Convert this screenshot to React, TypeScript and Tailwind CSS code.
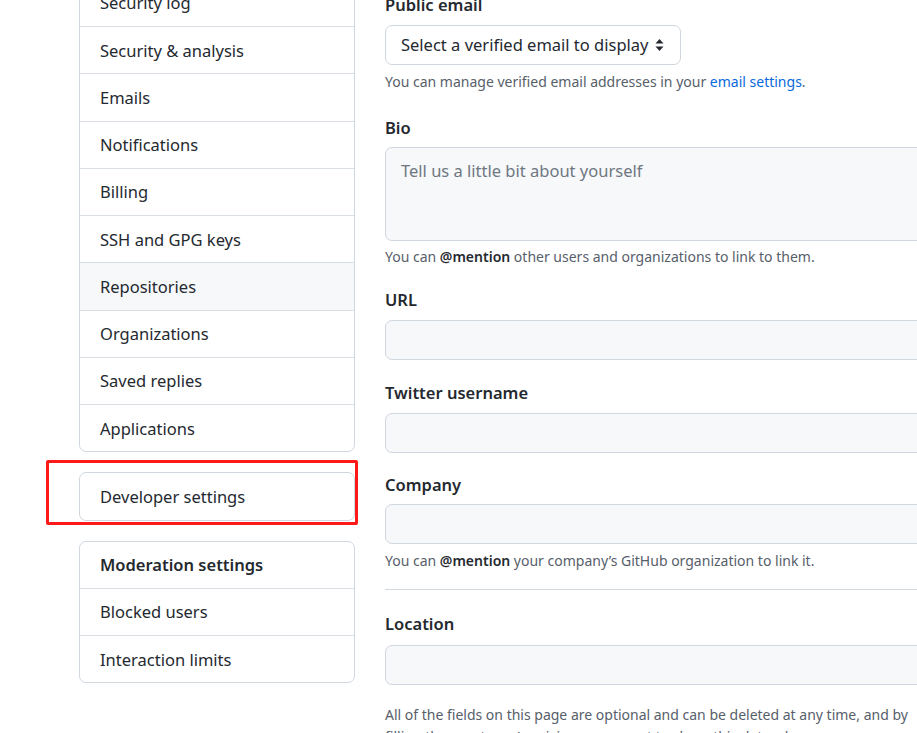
import { ReactNode } from "react";

const menu = [
  "Security log",
  "Security & analysis",
  "Emails",
  "Notifications",
  "Billing",
  "SSH and GPG keys",
  "Repositories",
  "Organizations",
  "Saved replies",
  "Applications",
];

function MenuRow({
  children,
  active,
  bold,
  first,
}: {
  children: ReactNode;
  active?: boolean;
  bold?: boolean;
  first?: boolean;
}) {
  return (
    <div
      className={`px-[20px] pt-[10.5px] pb-[9.5px] text-[16.5px] leading-[26.25px] text-[#24292f] ${
        first ? "" : "border-t border-[#d8dee4]"
      } ${active ? "bg-[#f6f8fa]" : ""} ${bold ? "font-semibold" : ""}`}
    >
      {children}
    </div>
  );
}

function Label({ children, className = "" }: { children: ReactNode; className?: string }) {
  return (
    <div className={`text-[16.5px] leading-[26.25px] font-semibold text-[#24292f] ${className}`}>
      {children}
    </div>
  );
}

function Note({ children, className = "" }: { children: ReactNode; className?: string }) {
  return (
    <p className={`text-[14px] leading-[22.5px] text-[#57606a] ${className}`}>{children}</p>
  );
}

function TextInput() {
  return (
    <input
      type="text"
      className="block h-[40px] w-full rounded-[7px] border border-[#d0d7de] bg-[#f6f8fa] px-[15px] text-[16.5px] outline-none"
    />
  );
}

export default function App() {
  return (
    <div className="h-[733px] w-[917px] overflow-hidden bg-white font-['Noto_Sans',sans-serif]">
      <div className="flex gap-[30px] pl-[79px]">
        {/* Sidebar */}
        <div className="w-[276px] shrink-0">
          <div className="-mt-[21.25px] overflow-hidden rounded-[7px] border border-[#d0d7de]">
            {menu.map((m, i) => (
              <MenuRow key={m} first={i === 0} active={m === "Repositories"}>
                {m}
              </MenuRow>
            ))}
          </div>

          <div className="relative mt-[20px]">
            <div className="overflow-hidden rounded-[7px] border border-[#d0d7de]">
              <MenuRow first>Developer settings</MenuRow>
            </div>
            <div className="pointer-events-none absolute -top-[12px] -bottom-[4px] -left-[33px] -right-[3px] rounded-[2px] border-[3px] border-[#ff1a1a]" />
          </div>

          <div className="mt-[20px] overflow-hidden rounded-[7px] border border-[#d0d7de]">
            <MenuRow first bold>
              Moderation settings
            </MenuRow>
            <MenuRow>Blocked users</MenuRow>
            <MenuRow>Interaction limits</MenuRow>
          </div>
        </div>

        {/* Main form */}
        <div className="w-[760px] shrink-0">
          <Label className="-mt-[8px] mb-[7px]">Public email</Label>
          <div className="relative flex h-[40px] w-[296px] items-center rounded-[7px] border border-[#d0d7de] bg-white pl-[15px] pt-px text-[16.5px] text-[#24292f]">
            Select a verified email to display
            <svg
              className="absolute right-[16px] top-1/2 -translate-y-1/2"
              width="9"
              height="13"
              viewBox="0 0 9 13"
            >
              <path d="M4.5 0.5 L8.5 5 L0.5 5 Z" fill="#24292f" />
              <path d="M0.5 8 L8.5 8 L4.5 12.5 Z" fill="#24292f" />
            </svg>
          </div>
          <Note className="mt-[6px]">
            You can manage verified email addresses in your{" "}
            <span className="text-[#0969da]">email settings</span>.
          </Note>

          <Label className="mt-[21px] mb-[6px]">Bio</Label>
          <textarea
            placeholder="Tell us a little bit about yourself"
            className="block h-[94px] w-full resize-none rounded-[7px] border border-[#d0d7de] bg-[#f6f8fa] px-[15px] py-[10px] text-[16.5px] leading-[26.25px] text-[#24292f] outline-none placeholder:text-[#6e7781]"
          />
          <Note className="mt-[5px]">
            You can <b className="font-semibold text-[#24292f]">@mention</b> other users and
            organizations to link to them.
          </Note>

          <Label className="mt-[18.5px] mb-[7px]">URL</Label>
          <TextInput />

          <Label className="mt-[20px] mb-[6px]">Twitter username</Label>
          <TextInput />

          <Label className="mt-[19px] mb-[6px]">Company</Label>
          <TextInput />
          <Note className="mt-[6px]">
            You can <b className="font-semibold text-[#24292f]">@mention</b> your company’s
            GitHub organization to link it.
          </Note>

          <hr className="mt-[17px] border-t border-[#d0d7de]" />

          <Label className="mt-[21px] mb-[7px]">Location</Label>
          <TextInput />

          <Note className="mt-[19px] w-[540px]">
            All of the fields on this page are optional and can be deleted at any time, and by
            filling them out, you're giving us consent to share this data wherever your user
            profile appears.
          </Note>
        </div>
      </div>
    </div>
  );
}
